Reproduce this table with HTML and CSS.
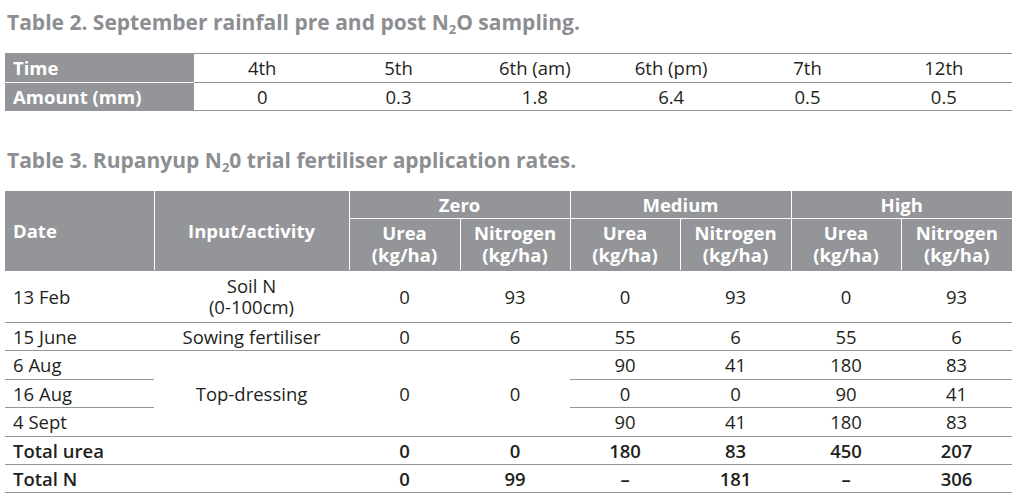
FILE: index.html
```html
<!DOCTYPE html>
<html lang="en">
<head>
<meta charset="utf-8">
<title>Rainfall and fertiliser tables</title>
<link rel="stylesheet" href="styles.css">
</head>
<body>
<div class="page">
  <h2 class="caption caption-first">Table 2. September rainfall pre and post N<sub>2</sub>O sampling.</h2>
  <table class="rain">
    <colgroup>
      <col class="rain-label">
      <col><col><col><col><col><col>
    </colgroup>
    <tbody>
      <tr>
        <th>Time</th>
        <td>4th</td><td>5th</td><td>6th (am)</td><td>6th (pm)</td><td>7th</td><td>12th</td>
      </tr>
      <tr>
        <th>Amount (mm)</th>
        <td>0</td><td>0.3</td><td>1.8</td><td>6.4</td><td>0.5</td><td>0.5</td>
      </tr>
    </tbody>
  </table>

  <h2 class="caption caption-second">Table 3. Rupanyup N<sub>2</sub>0 trial fertiliser application rates.</h2>
  <table class="fert">
    <colgroup>
      <col class="c-date">
      <col class="c-input">
      <col class="c-a"><col class="c-b"><col class="c-b"><col class="c-a"><col class="c-b"><col class="c-a">
    </colgroup>
    <thead>
      <tr class="h1">
        <th rowspan="2" class="left">Date</th>
        <th rowspan="2">Input/activity</th>
        <th colspan="2">Zero</th>
        <th colspan="2">Medium</th>
        <th colspan="2">High</th>
      </tr>
      <tr class="h2">
        <th><span class="ln">Urea</span><span class="ln">(kg/ha)</span></th>
        <th><span class="ln">Nitrogen</span><span class="ln">(kg/ha)</span></th>
        <th><span class="ln">Urea</span><span class="ln">(kg/ha)</span></th>
        <th><span class="ln">Nitrogen</span><span class="ln">(kg/ha)</span></th>
        <th><span class="ln">Urea</span><span class="ln">(kg/ha)</span></th>
        <th><span class="ln">Nitrogen</span><span class="ln">(kg/ha)</span></th>
      </tr>
    </thead>
    <tbody>
      <tr class="tall">
        <td class="left">13 Feb</td>
        <td><span class="ln">Soil N</span><span class="ln">(0-100cm)</span></td>
        <td>0</td><td>93</td><td>0</td><td>93</td><td>0</td><td>93</td>
      </tr>
      <tr>
        <td class="left">15 June</td>
        <td>Sowing fertiliser</td>
        <td>0</td><td>6</td><td>55</td><td>6</td><td>55</td><td>6</td>
      </tr>
      <tr>
        <td class="left">6 Aug</td>
        <td rowspan="3">Top-dressing</td>
        <td rowspan="3">0</td><td rowspan="3">0</td>
        <td>90</td><td>41</td><td>180</td><td>83</td>
      </tr>
      <tr>
        <td class="left">16 Aug</td>
        <td>0</td><td>0</td><td>90</td><td>41</td>
      </tr>
      <tr>
        <td class="left">4 Sept</td>
        <td>90</td><td>41</td><td>180</td><td>83</td>
      </tr>
      <tr class="total">
        <td class="left">Total urea</td>
        <td></td>
        <td>0</td><td>0</td><td>180</td><td>83</td><td>450</td><td>207</td>
      </tr>
      <tr class="total">
        <td class="left">Total N</td>
        <td></td>
        <td>0</td><td>99</td><td>–</td><td>181</td><td>–</td><td>306</td>
      </tr>
    </tbody>
  </table>
</div>
</body>
</html>
```

FILE: styles.css
```css
html, body {
  margin: 0;
  padding: 0;
  background: #ffffff;
}

body {
  font-family: "Open Sans", "Noto Sans", "Liberation Sans", sans-serif;
  color: #231f20;
}

.page {
  padding: 10px 6px 0 5px;
}

.caption {
  margin: 0 0 0 2px;
  font-size: 21px;
  line-height: 24px;
  font-weight: 700;
  color: #8c8e91;
  letter-spacing: 0;
}

.caption sub {
  font-size: 13px;
  line-height: 0;
  vertical-align: -4px;
}

.caption-first {
  margin-bottom: 19px;
}

.caption-second {
  margin-top: 37px;
  margin-bottom: 19px;
}

table {
  border-collapse: collapse;
  table-layout: fixed;
  width: 1007px;
}

.ln {
  display: block;
}

/* Table 2 */
.rain {
  border-top: 1px solid #939598;
}

.rain-label {
  width: 189px;
}

.rain th {
  background: #939598;
  color: #ffffff;
  font-weight: 700;
  font-size: 18.5px;
  text-align: left;
  padding: 0 0 0 8px;
  line-height: 27.5px;
  border-bottom: 1px solid #ffffff;
}

.rain tr:last-child th {
  border-bottom: 1px solid #939598;
}

.rain td {
  font-size: 18.5px;
  text-align: center;
  padding: 0;
  line-height: 27.5px;
  border-bottom: 1px solid #939598;
}

/* Table 3 */
.c-date { width: 149px; }
.c-input { width: 195px; }
.c-a { width: 111px; }
.c-b { width: 110px; }

.fert thead th {
  background: #939598;
  color: #ffffff;
  font-weight: 700;
  font-size: 18.5px;
  text-align: center;
  vertical-align: middle;
  padding: 0;
  border: 1px solid #ffffff;
}

.fert thead tr.h1 th {
  border-top: none;
  line-height: 27px;
}

.fert thead tr.h2 th {
  line-height: 22px;
  padding: 3px 0 4px;
  border-bottom: 1px solid #939598;
}

.fert thead th:first-child {
  border-left: none;
}

.fert thead tr.h1 th:last-child,
.fert thead tr.h2 th:last-child {
  border-right: none;
}

.fert thead th[rowspan] {
  border-bottom: 1px solid #939598;
}

.fert th.left,
.fert td.left {
  text-align: left;
  padding-left: 8px;
}

.fert td {
  font-size: 18.5px;
  text-align: center;
  vertical-align: middle;
  line-height: 27.4px;
  padding: 0;
  border-bottom: 1px solid #939598;
}

.fert tr.tall td {
  line-height: 21px;
  padding: 4px 0 5px;
}

.fert tr.tall td.left {
  padding-left: 8px;
}

.fert tr.total td {
  font-weight: 600;
}
```
